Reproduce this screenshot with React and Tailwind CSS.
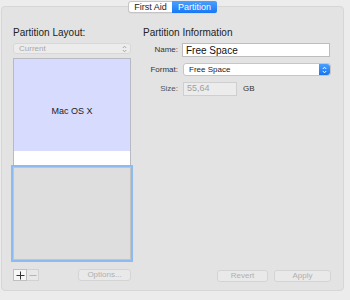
import React from 'react'

const font = { fontFamily: '"Liberation Sans", Arial, sans-serif' };

function Stepper({ active }) {
  return (
    <div className={`flex h-full w-[11px] items-center justify-center rounded-r-[3px] ${active ? 'bg-gradient-to-b from-[#4aa0ff] to-[#1474f2]' : ''}`}>
      <svg width="5" height="8" viewBox="0 0 5 8" fill="none" stroke={active ? '#ffffff' : '#a8a8a8'} strokeWidth="1">
        <path d="M0.8 3 L2.5 1.2 L4.2 3" />
        <path d="M0.8 5 L2.5 6.8 L4.2 5" />
      </svg>
    </div>
  );
}

export default function App() {
  return (
    <div className="w-[350px] h-[300px] bg-[#ececec] overflow-hidden text-[#222]" style={font}>
      {/* tab switch */}
      <div className="relative z-10 flex justify-center pt-[1px]">
        <div className="ml-[-5px] flex h-[12px] rounded-[3px] border border-[#c4c4c4] bg-white text-[9px] leading-[10px] shadow-[0_0.5px_0_rgba(0,0,0,0.08)]">
          <div className="flex w-[43px] items-center justify-center text-[#222]">First Aid</div>
          <div className="flex w-[45px] items-center justify-center rounded-r-[2px] bg-gradient-to-b from-[#4aa0ff] to-[#1677f4] text-white -my-[1px] -mr-[1px]">Partition</div>
        </div>
      </div>

      {/* group box */}
      <div className="ml-[1px] -mt-[7px] flex h-[285px] w-[343px] rounded-[4px] border border-[#d6d6d6] bg-[#e3e3e3] pt-[20px]">
        {/* left column */}
        <div className="ml-[10px] flex w-[120px] flex-col">
          <div className="h-[12px] pl-[1px] text-[10px] leading-[12px] text-[#222]">Partition Layout:</div>
          <div className="mt-[4px] ml-[1px] flex h-[11px] w-[118px] items-center justify-between rounded-[3px] border border-[#d8d8d8] bg-[#ececec] pl-[5px] text-[8px] text-[#a8a8a8]">
            <span>Current</span>
            <Stepper />
          </div>
          <div className="mt-[4px] ml-[1px] flex h-[204px] w-[118px] flex-col">
            <div className="flex h-[107px] items-center justify-center border border-b-0 border-[#b9b9c4] bg-[linear-gradient(to_bottom,#d7dbfe_92px,#ffffff_92px)] text-[9px] text-[#222]">
              Mac OS X
            </div>
            <div className="-mx-[2px] h-[97px] border-[2px] border-[#8cbbf2] bg-[#dedede]">
              <div className="h-full border border-[#c4c4c4]"></div>
            </div>
          </div>
          <div className="mt-[7px] flex h-[12px] items-center justify-between pl-[1px] pr-[1px]">
            <div className="flex h-[12px]">
              <div className="flex w-[14px] items-center justify-center border border-[#c0c0c0] bg-[#f7f7f7]">
                <svg width="9" height="9" viewBox="0 0 9 9" stroke="#333" strokeWidth="1"><path d="M4.5 0.5 V8.5 M0.5 4.5 H8.5" /></svg>
              </div>
              <div className="flex w-[12px] items-center justify-center border border-l-0 border-[#d2d2d2] bg-[#e8e8e8]">
                <svg width="8" height="9" viewBox="0 0 8 9" stroke="#b4b4b4" strokeWidth="1"><path d="M0.5 4.5 H7.5" /></svg>
              </div>
            </div>
            <div className="flex h-[12px] w-[53px] items-center justify-center rounded-[3px] border border-[#d4d4d4] bg-[#e9e9e9] text-[8px] text-[#b0b0b0]">Options...</div>
          </div>
        </div>

        {/* right column */}
        <div className="ml-[11px] flex flex-1 flex-col">
          <div className="h-[12px] text-[10px] leading-[12px] text-[#222]">Partition Information</div>
          <div className="mt-[4px] flex h-[14px] items-center">
            <div className="w-[35px] text-right text-[8px] text-[#333]">Name:</div>
            <div className="ml-[4px] flex h-[14px] w-[148px] items-center border border-[#bdbdbd] bg-white pl-[3px] text-[10px] text-[#111]">Free Space</div>
          </div>
          <div className="mt-[6px] flex h-[13px] items-center">
            <div className="w-[35px] text-right text-[8px] text-[#333]">Format:</div>
            <div className="ml-[5px] flex h-[13px] w-[148px] items-center justify-between rounded-[3px] border border-[#c6c6c6] bg-white pl-[5px] text-[8px] text-[#222]">
              <span>Free Space</span>
              <Stepper active />
            </div>
          </div>
          <div className="mt-[6px] flex h-[14px] items-center">
            <div className="w-[35px] text-right text-[8px] text-[#555]">Size:</div>
            <div className="ml-[5px] flex h-[14px] w-[54px] items-center border border-[#cfcfcf] bg-[#ececec] pl-[3px] text-[9px] text-[#a0a0a0]">55,64</div>
            <div className="ml-[6px] text-[8px] text-[#333]">GB</div>
          </div>
          <div className="flex-1"></div>
          <div className="mb-[8px] flex justify-end gap-[6px] pr-[12px]">
            <div className="flex h-[12px] w-[51px] items-center justify-center rounded-[3px] border border-[#d4d4d4] bg-[#e9e9e9] text-[8px] text-[#b0b0b0]">Revert</div>
            <div className="flex h-[12px] w-[57px] items-center justify-center rounded-[3px] border border-[#d4d4d4] bg-[#e9e9e9] text-[8px] text-[#b0b0b0]">Apply</div>
          </div>
        </div>
      </div>
    </div>
  )
}
